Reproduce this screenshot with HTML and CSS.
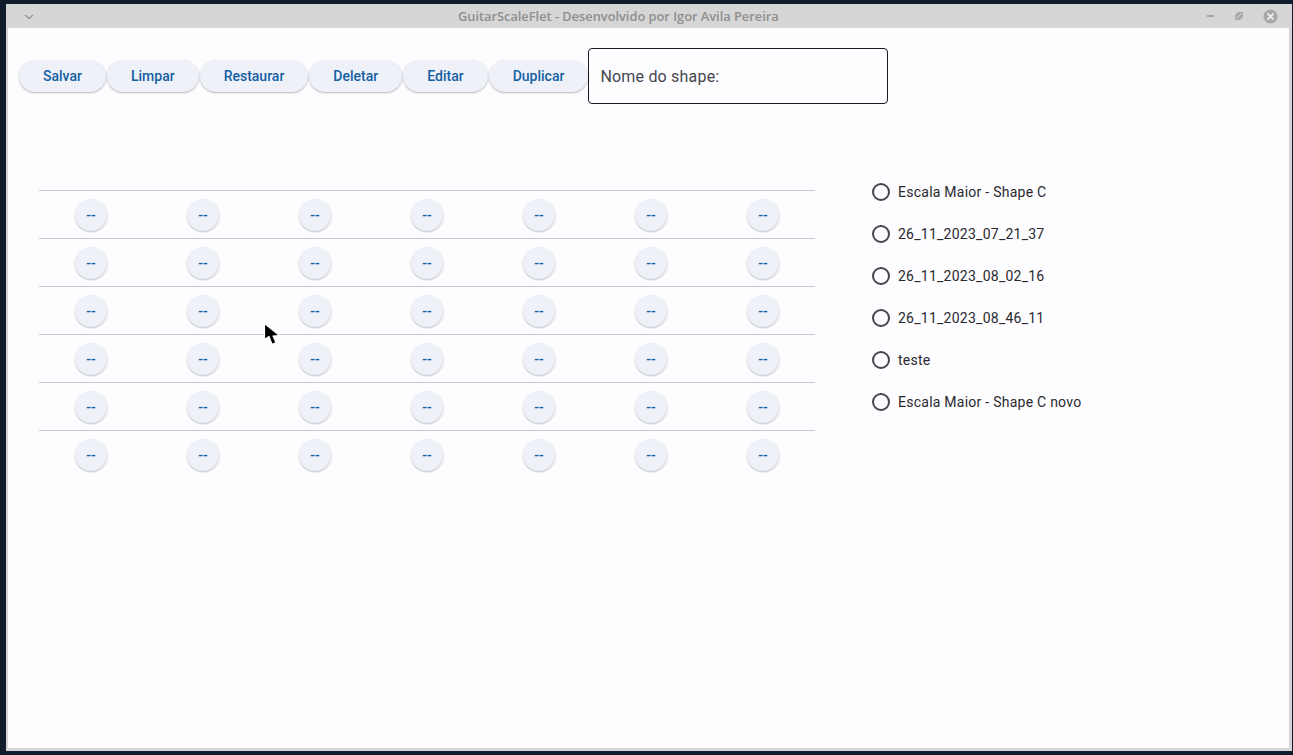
FILE: index.html
```html
<!DOCTYPE html>
<html lang="pt">
<head>
<meta charset="utf-8">
<title>GuitarScaleFlet</title>
<link rel="stylesheet" href="styles.css">
</head>
<body>
<div class="window">
  <div class="titlebar">
    <svg class="chevron" width="10" height="6" viewBox="0 0 10 6"><path d="M1 1 L5 4.5 L9 1" fill="none" stroke="#9a9a9a" stroke-width="1.6"/></svg>
    <span class="title">GuitarScaleFlet - Desenvolvido por Igor Avila Pereira</span>
    <div class="controls">
      <svg width="8" height="4" viewBox="0 0 8 4"><rect x="0" y="1" width="7" height="2" fill="#a8a8a8"/></svg>
      <svg width="8" height="8" viewBox="0 0 8 8"><path d="M0 3 L3 0 L8 0 L8 5 L5 8 L0 8 Z" fill="#a8a8a8"/><path d="M1 7 L7 1" stroke="#d6d6d6" stroke-width="1"/></svg>
      <svg width="15" height="15" viewBox="0 0 15 15"><circle cx="7.5" cy="7.5" r="7" fill="#a8a8a8"/><path d="M4.5 4.5 L10.5 10.5 M10.5 4.5 L4.5 10.5" stroke="#ececec" stroke-width="1.8"/></svg>
    </div>
  </div>
  <div class="content">
    <div class="toolbar">
      <button class="btn">Salvar</button>
      <button class="btn">Limpar</button>
      <button class="btn">Restaurar</button>
      <button class="btn">Deletar</button>
      <button class="btn">Editar</button>
      <button class="btn">Duplicar</button>
      <div class="field">Nome do shape:</div>
    </div>
    <div class="main">
      <div class="grid">
        <div class="row"><span class="cell">--</span><span class="cell">--</span><span class="cell">--</span><span class="cell">--</span><span class="cell">--</span><span class="cell">--</span><span class="cell">--</span></div>
        <div class="row"><span class="cell">--</span><span class="cell">--</span><span class="cell">--</span><span class="cell">--</span><span class="cell">--</span><span class="cell">--</span><span class="cell">--</span></div>
        <div class="row"><span class="cell">--</span><span class="cell">--</span><span class="cell">--</span><span class="cell">--</span><span class="cell">--</span><span class="cell">--</span><span class="cell">--</span></div>
        <div class="row"><span class="cell">--</span><span class="cell">--</span><span class="cell">--</span><span class="cell">--</span><span class="cell">--</span><span class="cell">--</span><span class="cell">--</span></div>
        <div class="row"><span class="cell">--</span><span class="cell">--</span><span class="cell">--</span><span class="cell">--</span><span class="cell">--</span><span class="cell">--</span><span class="cell">--</span></div>
        <div class="row"><span class="cell">--</span><span class="cell">--</span><span class="cell">--</span><span class="cell">--</span><span class="cell">--</span><span class="cell">--</span><span class="cell">--</span></div>
      </div>
      <ul class="radios">
        <li class="radio"><span class="dot"></span>Escala Maior - Shape C</li>
        <li class="radio"><span class="dot"></span>26_11_2023_07_21_37</li>
        <li class="radio"><span class="dot"></span>26_11_2023_08_02_16</li>
        <li class="radio"><span class="dot"></span>26_11_2023_08_46_11</li>
        <li class="radio"><span class="dot"></span>teste</li>
        <li class="radio"><span class="dot"></span>Escala Maior - Shape C novo</li>
      </ul>
    </div>
    <svg class="cursor" width="20" height="26" viewBox="0 0 20 26"><path d="M1.5 1.5 L1.5 17.5 L6 14.5 L9 22.5 L13 20.5 L10 14 L16.5 13.5 Z" fill="#000" stroke="#fff" stroke-width="1.2" stroke-linejoin="round"/></svg>
  </div>
</div>
</body>
</html>
```
FILE: styles.css
```css
html, body {
  margin: 0;
  padding: 0;
}
body {
  background: #111c2c;
  width: 1293px;
  height: 755px;
  overflow: hidden;
  font-family: Roboto, "Liberation Sans", sans-serif;
}
.window {
  margin: 4px 0 0 6px;
  width: 1286px;
  background: #d6d6d6;
  padding-bottom: 3px;
}
.titlebar {
  height: 24px;
  display: flex;
  align-items: center;
  position: relative;
}
.chevron {
  margin-left: 18px;
  margin-top: 1px;
}
.title {
  margin-left: 424px;
  font-family: "Open Sans", "Liberation Sans", sans-serif;
  font-weight: 600;
  font-size: 12.8px;
  color: #8e8e8e;
  white-space: nowrap;
}
.controls {
  margin-left: auto;
  margin-right: 14px;
  display: flex;
  align-items: center;
  gap: 20px;
}
.content {
  margin: 0 3px 0 2px;
  height: 720px;
  background: #fdfcff;
  position: relative;
}
.toolbar {
  display: flex;
  align-items: center;
  padding: 20px 0 0 11px;
  gap: 1px;
}
.btn {
  height: 32px;
  padding: 0 24px;
  border: none;
  border-radius: 16px;
  background: #eff1f8;
  color: #1460a3;
  font-family: Roboto, sans-serif;
  font-weight: 500;
  font-size: 14px;
  box-shadow: 0 1px 2px rgba(0, 0, 0, 0.28);
  margin-top: 0;
}
.field {
  margin-left: -1px;
  width: 287px;
  height: 54px;
  border: 1px solid #1b1b1f;
  border-radius: 4px;
  display: flex;
  align-items: center;
  padding-left: 11px;
  box-sizing: content-box;
  font-size: 16px;
  color: #44474e;
  letter-spacing: 0.2px;
}
.main {
  display: flex;
  align-items: flex-start;
  margin-top: 67px;
}
.grid {
  margin-left: 31px;
  margin-top: 19px;
  width: 776px;
}
.row {
  border-top: 1px solid #c7c6cf;
  height: 47px;
  display: flex;
  align-items: center;
  padding: 0 36px;
  gap: 80px;
}
.cell {
  width: 32px;
  height: 32px;
  border-radius: 50%;
  background: #eff1f8;
  box-shadow: 0 1px 2px rgba(0, 0, 0, 0.25);
  display: flex;
  align-items: center;
  justify-content: center;
  color: #1460a3;
  font-weight: 500;
  font-size: 14px;
}
.radios {
  list-style: none;
  margin: 0 0 0 57px;
  padding: 0;
}
.radio {
  height: 42px;
  display: flex;
  align-items: center;
  font-size: 14px;
  color: #2a2a2e;
  letter-spacing: 0.25px;
}
.dot {
  width: 14px;
  height: 14px;
  border: 2px solid #44474e;
  border-radius: 50%;
  margin-right: 8px;
}
.cursor {
  position: absolute;
  left: 255px;
  top: 294px;
}
```
